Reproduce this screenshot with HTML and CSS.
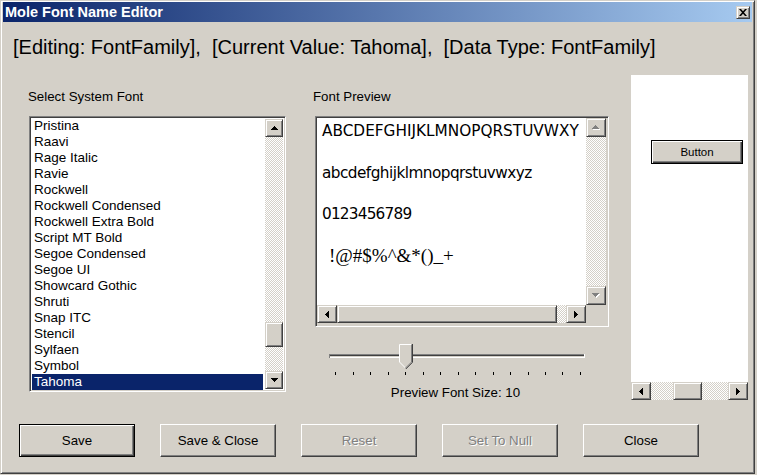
FILE: index.html
```html
<!DOCTYPE html>
<html>
<head>
<meta charset="utf-8">
<title>Mole Font Name Editor</title>
<link rel="stylesheet" href="styles.css">
</head>
<body>
<div class="window">
  <div class="titlebar">
    <span class="title">Mole Font Name Editor</span>
    <span class="close-btn raised"><svg width="8" height="7" viewBox="0 0 8 7"><path d="M0 0h2l2 2.2L6 0h2L5 3.5 8 7H6L4 4.8 2 7H0l3-3.5z"/></svg></span>
  </div>
  <div class="header">[Editing: FontFamily],  [Current Value: Tahoma],  [Data Type: FontFamily]</div>
  <div class="main">
    <div class="col-list">
      <div class="label label-list">Select System Font</div>
      <div class="listbox sunken">
        <ul class="items">
          <li>Pristina</li>
          <li>Raavi</li>
          <li>Rage Italic</li>
          <li>Ravie</li>
          <li>Rockwell</li>
          <li>Rockwell Condensed</li>
          <li>Rockwell Extra Bold</li>
          <li>Script MT Bold</li>
          <li>Segoe Condensed</li>
          <li>Segoe UI</li>
          <li>Showcard Gothic</li>
          <li>Shruti</li>
          <li>Snap ITC</li>
          <li>Stencil</li>
          <li>Sylfaen</li>
          <li>Symbol</li>
          <li class="selected">Tahoma</li>
        </ul>
        <div class="vscroll list-vscroll">
          <div class="sbtn raised"><svg width="7" height="4" viewBox="0 0 7 4"><path d="M3 0h1v1h1v1h1v1h1v1H0V3h1V2h1V1h1z"/></svg></div>
          <div class="track"><div class="thumb raised list-thumb"></div></div>
          <div class="sbtn raised"><svg width="7" height="4" viewBox="0 0 7 4"><path d="M0 0h7v1H6v1H5v1H4v1H3V3H2V2H1V1H0z"/></svg></div>
        </div>
      </div>
    </div>

    <div class="col-preview">
      <div class="label label-preview">Font Preview</div>
      <div class="preview sunken">
        <div class="preview-text">
          <div class="pline caps">ABCDEFGHIJKLMNOPQRSTUVWXY</div>
          <div class="pline lower">abcdefghijklmnopqrstuvwxyz</div>
          <div class="pline digits">0123456789</div>
          <div class="pline symbols">!@#$%^&amp;*()_+</div>
        </div>
        <div class="vscroll preview-vscroll">
          <div class="sbtn raised pv-btn"><svg width="8" height="5" viewBox="0 0 8 5"><path fill="#fff" d="M4 1h1v1h1v1h1v1h1v1H1V4h1V3h1V2h1z"/><path fill="#808080" d="M3 0h1v1h1v1h1v1h1v1H0V3h1V2h1V1h1z"/></svg></div>
          <div class="track"></div>
          <div class="sbtn raised pv-btn"><svg width="8" height="5" viewBox="0 0 8 5"><path fill="#fff" d="M1 1h7v1H7v1H6v1H5v1H4V4H3V3H2V2H1z"/><path fill="#808080" d="M0 0h7v1H6v1H5v1H4v1H3V3H2V2H1V1H0z"/></svg></div>
        </div>
        <div class="hscroll preview-hscroll">
          <div class="hbtn raised"><svg width="4" height="7" viewBox="0 0 4 7"><path d="M3 0h1v7H3V6H2V5H1V4H0V3h1V2h1V1h1z"/></svg></div>
          <div class="htrack"><div class="hthumb raised preview-hthumb"></div></div>
          <div class="hbtn raised"><svg width="4" height="7" viewBox="0 0 4 7"><path d="M0 0h1v1h1v1h1v1h1v1H3v1H2v1H1v1H0z"/></svg></div>
        </div>
        <div class="corner"></div>
      </div>
      <svg class="slider" width="294" height="40" viewBox="0 0 294 40">
        <rect x="14" y="14" width="256" height="1" fill="#808080"/>
        <rect x="14" y="15" width="256" height="1" fill="#404040"/>
        <rect x="14" y="16" width="256" height="1" fill="#d4d0c8"/>
        <rect x="14" y="17" width="256" height="1" fill="#ffffff"/>
        <rect x="14" y="14" width="1" height="4" fill="#808080"/>
        <rect x="269" y="14" width="1" height="4" fill="#ffffff"/>
        <polygon points="84,4 97,4 97,22 90.5,28.5 84,22" fill="#d4d0c8"/>
        <polyline points="84.5,22 84.5,4.5 96.5,4.5" fill="none" stroke="#ffffff" stroke-width="1"/>
        <polyline points="84.5,22 90.5,28" fill="none" stroke="#ffffff" stroke-width="1"/>
        <polyline points="96.5,4.5 96.5,22 90.5,28" fill="none" stroke="#808080" stroke-width="1"/>
        <polyline points="97.5,4 97.5,22.3 90.8,29" fill="none" stroke="#404040" stroke-width="1"/>
        <g fill="#000">
          <rect x="20" y="32" width="1" height="3"/>
          <rect x="38" y="32" width="1" height="3"/>
          <rect x="55" y="32" width="1" height="3"/>
          <rect x="73" y="32" width="1" height="3"/>
          <rect x="90" y="32" width="1" height="3"/>
          <rect x="108" y="32" width="1" height="3"/>
          <rect x="125" y="32" width="1" height="3"/>
          <rect x="143" y="32" width="1" height="3"/>
          <rect x="160" y="32" width="1" height="3"/>
          <rect x="178" y="32" width="1" height="3"/>
          <rect x="195" y="32" width="1" height="3"/>
          <rect x="213" y="32" width="1" height="3"/>
          <rect x="230" y="32" width="1" height="3"/>
          <rect x="247" y="32" width="1" height="3"/>
          <rect x="265" y="32" width="1" height="3"/>
        </g>
      </svg>
      <div class="size-label">Preview Font Size: 10</div>
    </div>

    <div class="col-panel">
      <div class="panel">
        <div class="panel-body">
          <button class="btn default small-btn">Button</button>
        </div>
        <div class="hscroll panel-hscroll">
          <div class="hbtn raised"><svg width="4" height="7" viewBox="0 0 4 7"><path d="M3 0h1v7H3V6H2V5H1V4H0V3h1V2h1V1h1z"/></svg></div>
          <div class="htrack"><div class="hthumb raised panel-hthumb"></div></div>
          <div class="hbtn raised"><svg width="4" height="7" viewBox="0 0 4 7"><path d="M0 0h1v1h1v1h1v1h1v1H3v1H2v1H1v1H0z"/></svg></div>
        </div>
      </div>
    </div>
  </div>

  <div class="buttons">
    <button class="btn default big-btn">Save</button>
    <button class="btn big-btn">Save &amp; Close</button>
    <button class="btn big-btn disabled">Reset</button>
    <button class="btn big-btn disabled">Set To Null</button>
    <button class="btn big-btn">Close</button>
  </div>
</div>
</body>
</html>
```

FILE: styles.css
```css
html, body {
  margin: 0;
  padding: 0;
  background: #d4d0c8;
}

body {
  width: 757px;
  height: 475px;
  overflow: hidden;
  font-family: "Liberation Sans", Arial, sans-serif;
  color: #000;
}

.window {
  width: 755px;
  height: 474px;
  box-sizing: border-box;
  border: 1px solid;
  border-color: #d4d0c8 #404040 #404040 #d4d0c8;
  box-shadow: inset 1px 1px #fff, inset -1px -1px #808080;
  padding: 1px 2px 2px 2px;
  background: #d4d0c8;
}

/* 3D helpers */
.raised {
  box-sizing: border-box;
  background: #d4d0c8;
  border: 1px solid;
  border-color: #d4d0c8 #404040 #404040 #d4d0c8;
  box-shadow: inset 1px 1px #fff, inset -1px -1px #808080;
}

.sunken {
  box-sizing: border-box;
  border: 1px solid;
  border-color: #808080 #fff #fff #808080;
  box-shadow: inset 1px 1px #404040, inset -1px -1px #d4d0c8;
  padding: 1px;
}

/* Title bar */
.titlebar {
  height: 20px;
  background: linear-gradient(to right, #0a246a, #a6caf0);
  display: flex;
  align-items: center;
  justify-content: space-between;
  padding: 0 2px 0 2px;
}

.title {
  color: #fff;
  font-weight: bold;
  font-size: 14.5px;
  line-height: 20px;
  white-space: nowrap;
}

.close-btn {
  width: 14px;
  height: 13px;
  display: flex;
  align-items: center;
  justify-content: center;
  margin-top: 1px;
}

.close-btn svg {
  display: block;
}

/* Header */
.header {
  margin-top: 13px;
  padding-left: 10px;
  font-size: 20px;
  line-height: 24px;
  white-space: pre;
}

/* Main */
.main {
  margin-top: 16px;
  display: flex;
  align-items: flex-start;
  padding-left: 26px;
}

.label {
  font-size: 13.3px;
  line-height: 15px;
  white-space: nowrap;
  margin-bottom: 12px;
}

.col-list {
  width: 257px;
  padding-top: 14px;
}

.label-list {
  margin-left: -1px;
}

.listbox {
  width: 257px;
  height: 276px;
  background: #fff;
  display: flex;
}

.items {
  list-style: none;
  margin: 0 2px 0 1px;
  padding: 0;
  flex: 1;
  font-size: 13.5px;
}

.items li {
  height: 16px;
  line-height: 16px;
  padding-left: 2px;
  white-space: nowrap;
}

.items li.selected {
  background: #0a246a;
  color: #fff;
}

.vscroll {
  display: flex;
  flex-direction: column;
}

.list-vscroll {
  width: 18px;
  margin-right: 1px;
  padding: 1px 0;
  box-sizing: border-box;
  height: 272px;
}

.sbtn {
  height: 18px;
  display: flex;
  align-items: center;
  justify-content: center;
  flex: none;
}

.sbtn svg, .hbtn svg {
  display: block;
}

.track, .htrack {
  flex: 1;
  background: repeating-conic-gradient(#d4d0c8 0 25%, #fff 0 50%) 0 0 / 2px 2px;
}

.list-thumb {
  height: 25px;
  margin-top: 185px;
}

/* Preview */
.col-preview {
  width: 294px;
  margin-left: 29px;
  padding-top: 14px;
}

.label-preview {
  margin-left: -2px;
}

.preview {
  width: 294px;
  height: 211px;
  background: #d4d0c8;
  display: grid;
  grid-template-columns: 269px 20px;
  grid-template-rows: 187px 18px;
}

.preview-text {
  background: #fff;
  padding: 3px 0 0 5px;
  overflow: hidden;
  font-family: "DejaVu Sans", sans-serif;
  font-size: 15.3px;
  white-space: nowrap;
}

.pline {
  line-height: 20px;
  height: 20px;
  margin-bottom: 21.5px;
}

.lower {
  letter-spacing: -0.55px;
}

.digits {
  letter-spacing: -0.8px;
}

.symbols {
  font-family: "Liberation Serif", "Times New Roman", serif;
  font-size: 19px;
  padding-left: 7px;
}

.preview-vscroll .sbtn {
  height: 19px;
}

.hscroll {
  display: flex;
  height: 18px;
}

.hbtn {
  width: 20px;
  flex: none;
  display: flex;
  align-items: center;
  justify-content: center;
}

.htrack {
  display: flex;
}

.hthumb {
  flex: none;
}

.preview-hthumb {
  width: 220px;
}

.corner {
  background: #d4d0c8;
}

.slider {
  display: block;
  margin-top: 13px;
}

.size-label {
  margin-top: 5px;
  width: 281px;
  text-align: center;
  font-size: 13.3px;
  line-height: 15px;
  white-space: nowrap;
}

/* Right panel */
.col-panel {
  margin-left: 22px;
  width: 117px;
}

.panel {
  width: 117px;
  height: 325px;
  background: #fff;
  display: flex;
  flex-direction: column;
}

.panel-body {
  flex: 1;
  padding: 65px 0 0 20px;
}

.panel-hscroll .htrack {
  padding-left: 22px;
}

.panel-hthumb {
  width: 29px;
}

/* Buttons */
.btn {
  box-sizing: border-box;
  margin: 0;
  padding: 0;
  background: #d4d0c8;
  color: #000;
  font-family: "Liberation Sans", Arial, sans-serif;
  border: 1px solid;
  border-color: #fff #404040 #404040 #fff;
  box-shadow: inset -1px -1px #808080;
  display: flex;
  align-items: center;
  justify-content: center;
  white-space: nowrap;
}

.btn.default {
  border: 1px solid #000;
  box-shadow: inset 1px 1px #fff, inset -1px -1px #404040, inset -2px -2px #808080;
}

.btn.disabled {
  color: #808080;
  text-shadow: 1px 1px 0 #fff;
}

.small-btn {
  width: 92px;
  height: 24px;
  font-size: 11.5px;
}

.buttons {
  display: flex;
  gap: 25px;
  margin-top: 24px;
  padding-left: 16px;
}

.big-btn {
  width: 116px;
  height: 33px;
  font-size: 13.3px;
}
```
